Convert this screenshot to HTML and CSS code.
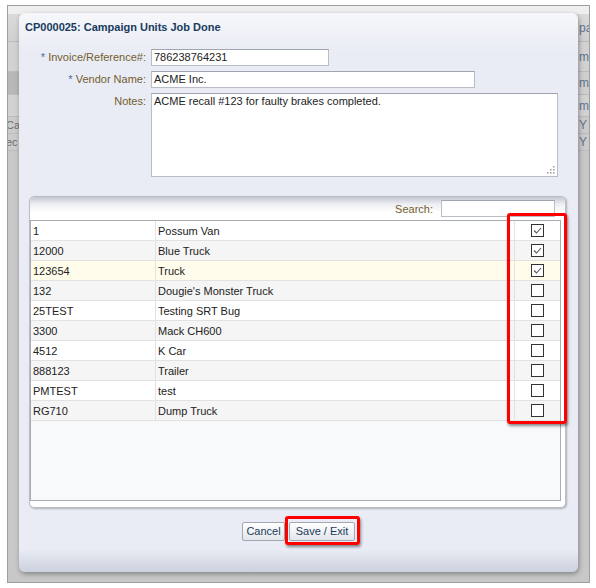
FILE: index.html
```html
<!DOCTYPE html>
<html>
<head>
<meta charset="utf-8">
<link rel="stylesheet" href="styles.css">
</head>
<body>
<div class="frame">
  <div class="backdrop">
    <div class="bd-top"></div>
    <div class="bd-row r1"><span class="bd-l"></span><span class="bd-r">pay</span></div>
    <div class="bd-row r2"><span class="bd-l"></span><span class="bd-r">min</span></div>
    <div class="bd-row r3"><span class="bd-l dark"></span><span class="bd-r">min</span></div>
    <div class="bd-row r4"><span class="bd-l"></span><span class="bd-r">min</span></div>
    <div class="bd-row r5"><span class="bd-l">Car</span><span class="bd-r">Y</span></div>
    <div class="bd-row r6"><span class="bd-l">ec</span><span class="bd-r">Y</span></div>
  </div>

  <div class="dialog">
    <div class="title">CP000025: Campaign Units Job Done</div>
    <div class="form">
      <label class="lbl"><span class="req">*</span> Invoice/Reference#:</label>
      <div class="input w-inv">786238764231</div>
      <label class="lbl"><span class="req">*</span> Vendor Name:</label>
      <div class="input w-ven">ACME Inc.</div>
      <label class="lbl">Notes:</label>
      <div class="textarea">ACME recall #123 for faulty brakes completed.
        <svg class="grip" width="9" height="9" viewBox="0 0 9 9"><g fill="#9a9a9a"><rect x="7" y="1" width="1.5" height="1.5"/><rect x="4" y="4" width="1.5" height="1.5"/><rect x="7" y="4" width="1.5" height="1.5"/><rect x="1" y="7" width="1.5" height="1.5"/><rect x="4" y="7" width="1.5" height="1.5"/><rect x="7" y="7" width="1.5" height="1.5"/></g></svg>
      </div>
    </div>

    <div class="panel">
      <div class="toolbar">
        <span class="search-lbl">Search:</span>
        <div class="search-input"></div>
      </div>
      <div class="table">
        <div class="row"><div class="c1">1</div><div class="c2">Possum Van</div><div class="c3"><svg class="cb" width="13" height="13" viewBox="0 0 13 13"><rect x="0.5" y="0.5" width="12" height="12" fill="#fff" stroke="#333"/><path d="M3 6.5 L5.5 9 L10 4" fill="none" stroke="#555" stroke-width="1.1"/></svg></div></div>
        <div class="row alt"><div class="c1">12000</div><div class="c2">Blue Truck</div><div class="c3"><svg class="cb" width="13" height="13" viewBox="0 0 13 13"><rect x="0.5" y="0.5" width="12" height="12" fill="#fff" stroke="#333"/><path d="M3 6.5 L5.5 9 L10 4" fill="none" stroke="#555" stroke-width="1.1"/></svg></div></div>
        <div class="row sel"><div class="c1">123654</div><div class="c2">Truck</div><div class="c3"><svg class="cb" width="13" height="13" viewBox="0 0 13 13"><rect x="0.5" y="0.5" width="12" height="12" fill="#fff" stroke="#333"/><path d="M3 6.5 L5.5 9 L10 4" fill="none" stroke="#555" stroke-width="1.1"/></svg></div></div>
        <div class="row alt"><div class="c1">132</div><div class="c2">Dougie's Monster Truck</div><div class="c3"><svg class="cb" width="13" height="13" viewBox="0 0 13 13"><rect x="0.5" y="0.5" width="12" height="12" fill="#fff" stroke="#333"/></svg></div></div>
        <div class="row"><div class="c1">25TEST</div><div class="c2">Testing SRT Bug</div><div class="c3"><svg class="cb" width="13" height="13" viewBox="0 0 13 13"><rect x="0.5" y="0.5" width="12" height="12" fill="#fff" stroke="#333"/></svg></div></div>
        <div class="row alt"><div class="c1">3300</div><div class="c2">Mack CH600</div><div class="c3"><svg class="cb" width="13" height="13" viewBox="0 0 13 13"><rect x="0.5" y="0.5" width="12" height="12" fill="#fff" stroke="#333"/></svg></div></div>
        <div class="row"><div class="c1">4512</div><div class="c2">K Car</div><div class="c3"><svg class="cb" width="13" height="13" viewBox="0 0 13 13"><rect x="0.5" y="0.5" width="12" height="12" fill="#fff" stroke="#333"/></svg></div></div>
        <div class="row alt"><div class="c1">888123</div><div class="c2">Trailer</div><div class="c3"><svg class="cb" width="13" height="13" viewBox="0 0 13 13"><rect x="0.5" y="0.5" width="12" height="12" fill="#fff" stroke="#333"/></svg></div></div>
        <div class="row"><div class="c1">PMTEST</div><div class="c2">test</div><div class="c3"><svg class="cb" width="13" height="13" viewBox="0 0 13 13"><rect x="0.5" y="0.5" width="12" height="12" fill="#fff" stroke="#333"/></svg></div></div>
        <div class="row alt"><div class="c1">RG710</div><div class="c2">Dump Truck</div><div class="c3"><svg class="cb" width="13" height="13" viewBox="0 0 13 13"><rect x="0.5" y="0.5" width="12" height="12" fill="#fff" stroke="#333"/></svg></div></div>
      </div>
    </div>

    <div class="buttons">
      <button class="btn btn-cancel">Cancel</button>
      <button class="btn btn-save">Save / Exit</button>
    </div>
  </div>

  <div class="hl hl-col"></div>
  <div class="hl hl-btn"></div>
</div>
</body>
</html>
```
FILE: styles.css
```css
body {
  margin: 0;
  background: #fff;
  font-family: "Liberation Sans", Arial, sans-serif;
  font-size: 11px;
  color: #222;
}

.frame {
  position: relative;
  margin: 5px 0 0 7px;
  width: 581px;
  height: 576px;
  border: 1px solid #9e9e9e;
  background: #c8c8c8;
  overflow: hidden;
}

/* background app */
.bd-top {
  height: 8px;
  background: #efefef;
}
.bd-row {
  display: flex;
  justify-content: space-between;
  box-sizing: border-box;
  border-bottom: 1px solid #bcbcbc;
}
.bd-row.r1 { height: 28px; background: linear-gradient(#dadada, #d0d0d0); }
.bd-row.r2 { height: 30px; background: #d2d2d2; }
.bd-row.r3 { height: 23px; background: #cfcfcf; }
.bd-row.r4 { height: 22px; background: #d2d2d2; }
.bd-row.r5 { height: 17px; background: #cbcbcb; }
.bd-row.r6 { height: 17px; background: #cbcbcb; }
.bd-l {
  width: 11px;
  overflow: hidden;
  white-space: nowrap;
  color: #6c6c6c;
  text-indent: -2px;
  display: flex;
  align-items: center;
}
.bd-l.dark { background: #b8b8b8; }
.bd-r {
  width: 11px;
  overflow: hidden;
  white-space: nowrap;
  color: #60758f;
  font-size: 12px;
  display: flex;
  align-items: center;
  padding-left: 1px;
  box-sizing: border-box;
}

/* dialog */
.dialog {
  position: absolute;
  left: 11px;
  top: 7px;
  width: 559px;
  height: 559px;
  border-radius: 6px;
  background: linear-gradient(#f6f7fa 0, #e9ecf4 40px, #e9ecf4 536px, #cbd1de 559px);
  box-shadow: 1px 2px 5px rgba(0, 0, 0, 0.35);
}

.title {
  padding: 7px 0 0 6px;
  height: 14px;
  line-height: 14px;
  font-weight: bold;
  color: #183b5f;
}

.form {
  margin-top: 15px;
  display: grid;
  grid-template-columns: 127px auto;
  column-gap: 5px;
  row-gap: 5px;
  justify-items: start;
}
.lbl {
  justify-self: end;
  line-height: 17px;
  color: #735d2e;
  white-space: nowrap;
}
.req { color: #3f6fa6; }

.input, .textarea, .search-input {
  box-sizing: border-box;
  background: #fff;
  border: 1px solid #b9bec6;
  border-top-color: #9fa5ae;
}
.input {
  height: 17px;
  line-height: 15px;
  padding-left: 2px;
}
.w-inv { width: 178px; }
.w-ven { width: 324px; }
.textarea {
  position: relative;
  width: 407px;
  height: 84px;
  padding: 1px 2px;
  line-height: 13px;
}
.grip {
  position: absolute;
  right: 2px;
  bottom: 2px;
}

/* table panel */
.panel {
  margin: 19px 0 0 10px;
  width: 537px;
  height: 312px;
  box-sizing: border-box;
  border: 1px solid #b9bec7;
  border-radius: 5px;
  background: #fff;
  box-shadow: 1px 1px 2px rgba(0, 0, 0, 0.25);
}
.toolbar {
  height: 23px;
  border-radius: 4px 4px 0 0;
  background: linear-gradient(#c2c7d0 0, #eceef2 7px, #ffffff 15px);
  display: flex;
  justify-content: flex-end;
  align-items: center;
  padding-right: 10px;
  gap: 8px;
}
.search-lbl { color: #735d2e; }
.search-input {
  width: 114px;
  height: 17px;
}

.table {
  margin-right: 4px;
  height: 281px;
  box-sizing: border-box;
  border: 1px solid #a9adb3;
  background: #f8f9fb;
}
.row {
  display: grid;
  grid-template-columns: 125px 359px 1fr;
  height: 20px;
  box-sizing: border-box;
  border-bottom: 1px solid #e2e2e2;
  background: #fff;
  line-height: 20px;
}
.row.alt { background: #f5f5f5; }
.row.sel { background: #fffcec; }
.row > div {
  padding-left: 2px;
  white-space: nowrap;
  overflow: hidden;
}
.c1, .c2 { border-right: 1px solid #e2e2e2; }
.row > .c3 {
  padding-left: 0;
  padding-right: 1px;
  display: flex;
  align-items: center;
  justify-content: center;
}
.cb { display: block; }

.buttons {
  margin-top: 14px;
  display: flex;
  justify-content: center;
  gap: 4px;
}
.btn {
  height: 19px;
  padding: 0;
  font-family: "Liberation Sans", Arial, sans-serif;
  font-size: 11px;
  color: #1d3b5c;
  background: linear-gradient(#ffffff, #e2e5eb);
  border: 1px solid #a2a8b1;
  border-radius: 2px;
  line-height: 17px;
  text-align: center;
}
.btn-cancel { width: 43px; }
.btn-save { width: 66px; }

/* annotation highlights */
.hl {
  position: absolute;
  box-sizing: border-box;
  border: 3px solid #ff0000;
  border-radius: 3px;
  box-shadow: 1px 2px 3px rgba(0, 0, 0, 0.45);
}
.hl-col {
  left: 499px;
  top: 207px;
  width: 60px;
  height: 211px;
}
.hl-btn {
  left: 277px;
  top: 510px;
  width: 75px;
  height: 29px;
}
```
